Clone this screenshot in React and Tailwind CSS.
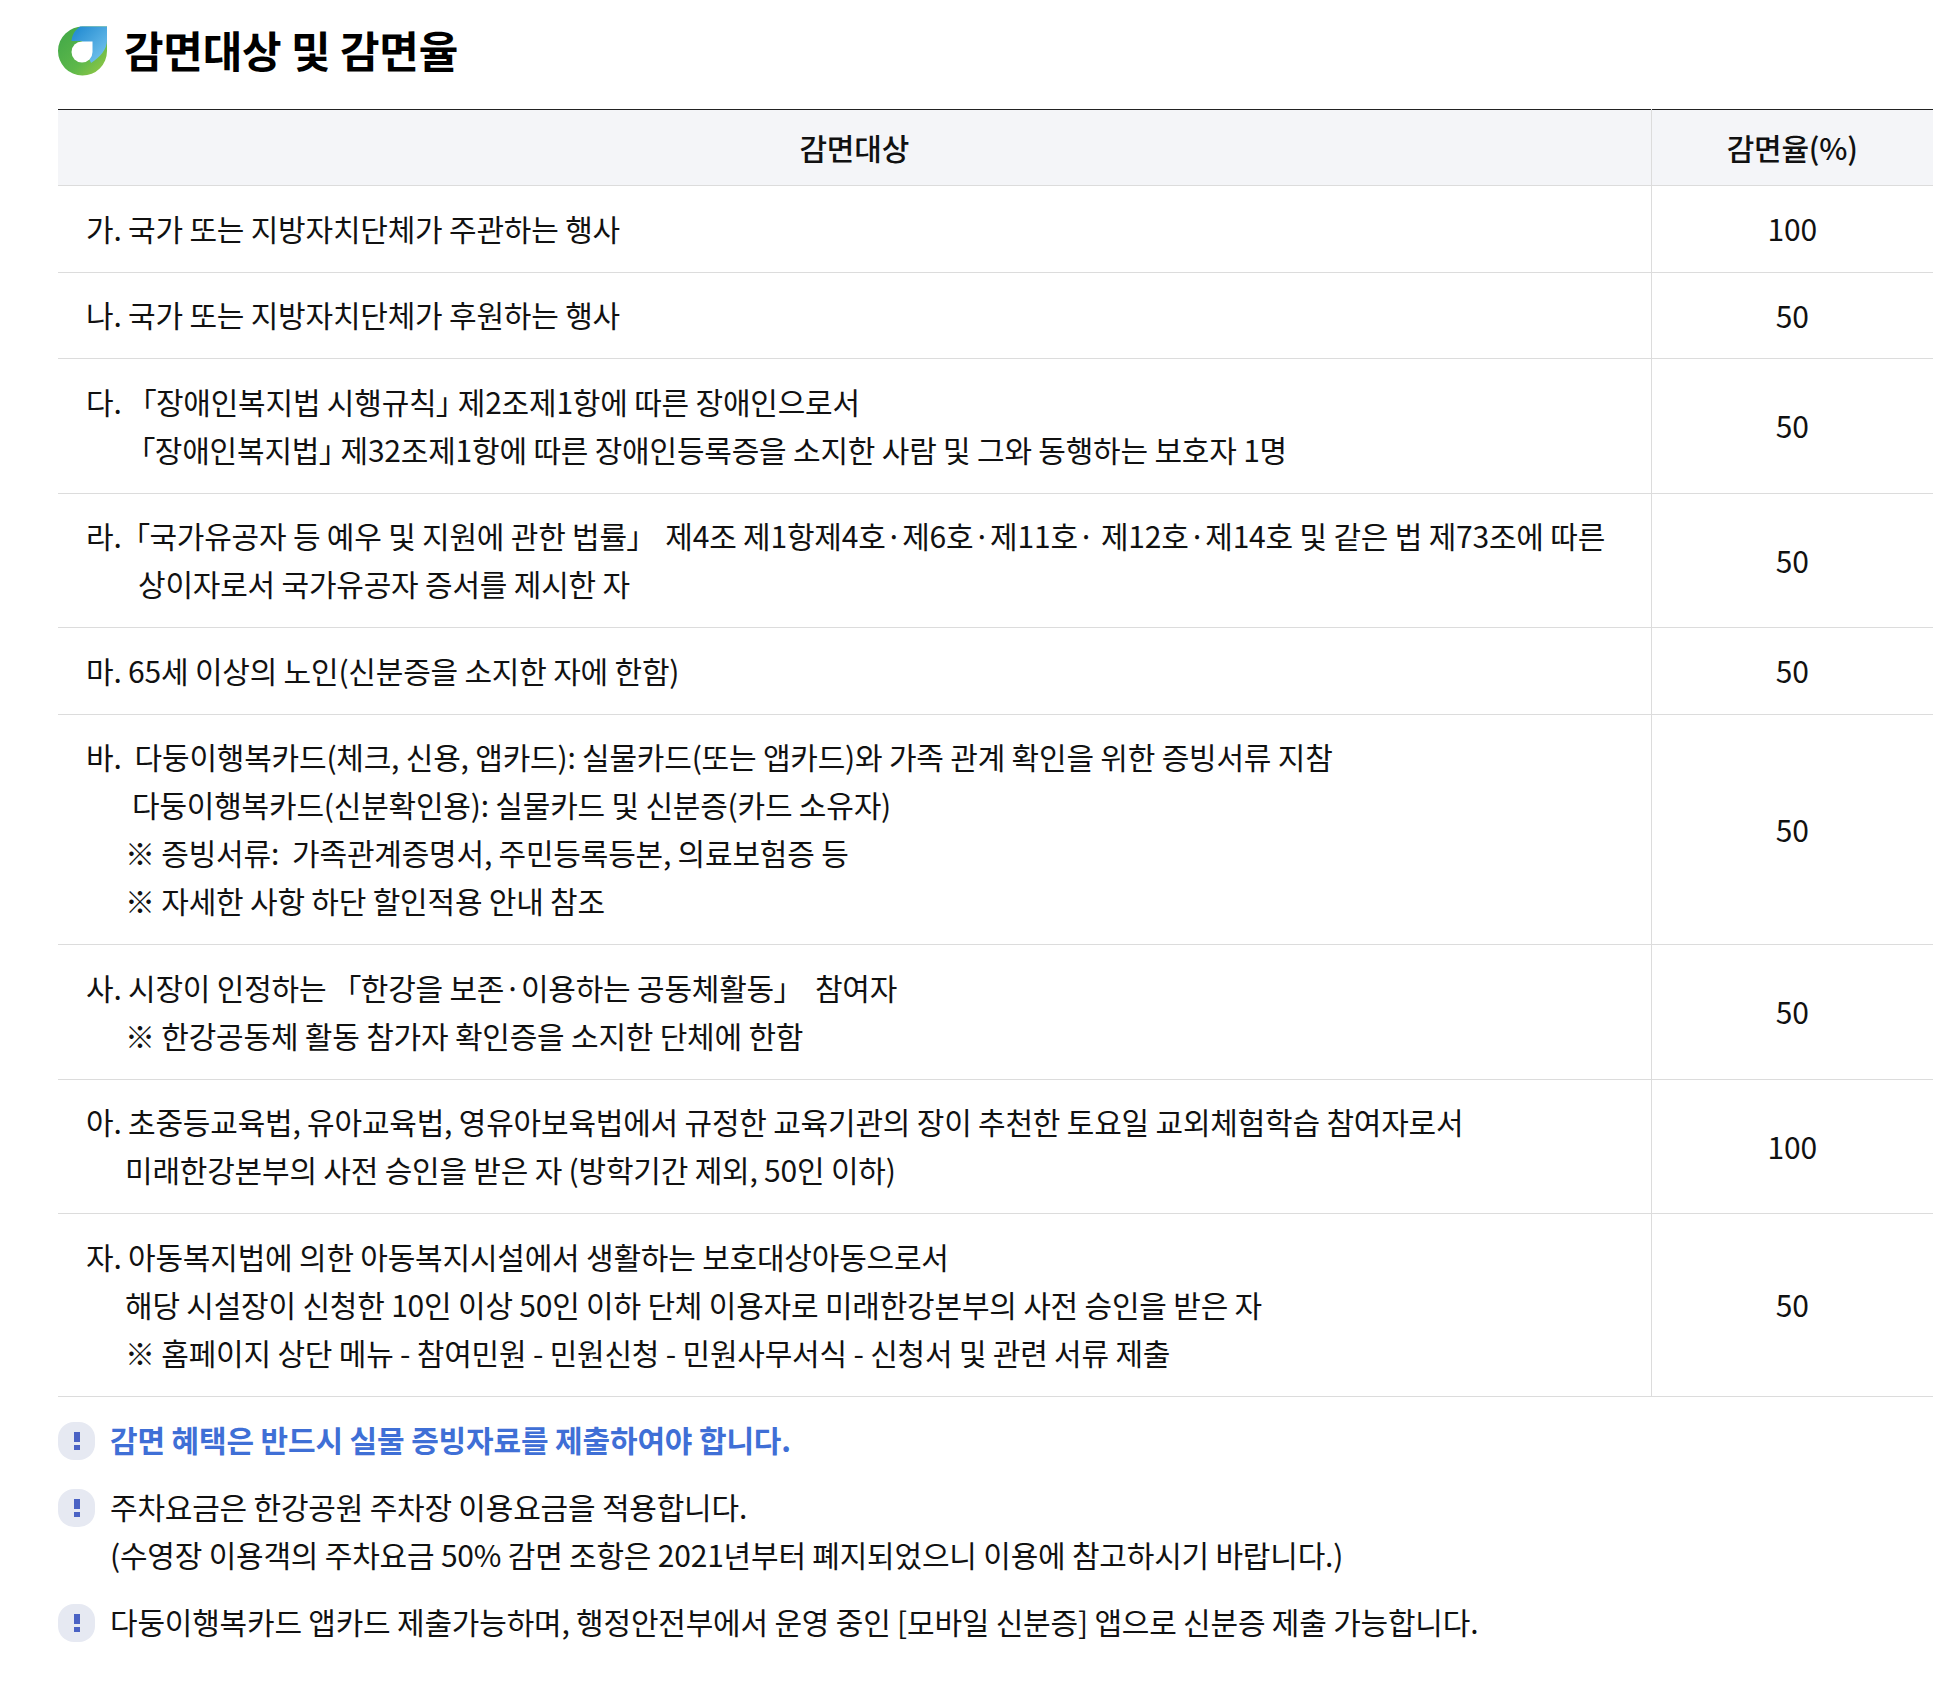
const Logo = () => (
  <svg width="50" height="50" viewBox="0 0 50 50" className="mt-[2px] self-start">
    <defs>
      <linearGradient id="g" x1="0" y1="0" x2="1" y2="1">
        <stop offset="0" stopColor="#3fa648" />
        <stop offset="0.6" stopColor="#5db84a" />
        <stop offset="1" stopColor="#9ccb45" />
      </linearGradient>
      <linearGradient id="b" x1="0" y1="0" x2="1" y2="1">
        <stop offset="0" stopColor="#1b86cf" />
        <stop offset="1" stopColor="#7cc9f0" />
      </linearGradient>
    </defs>
    <path d="M25 0.5H49V25A24.5 24.5 0 1 1 25 0.5Z" fill="url(#g)" />
    <path d="M22 0.5H49V14C49 24 42 31 33 37L24 15H13.5C14 9 17 4 22 0.5Z" fill="url(#b)" />
    <path d="M24 15.5H34.5V26A10.5 10.5 0 1 1 24 15.5Z" fill="#fff" />
  </svg>
);

const Bang = () => (
  <span className="mt-[7px] flex h-[38px] w-[37px] shrink-0 flex-col items-center justify-center gap-[3px] rounded-[16px] bg-[#e6e9f2]">
    <span className="h-[10px] w-[6px] bg-[#4a62c4]" />
    <span className="h-[5px] w-[6px] bg-[#4a62c4]" />
  </span>
);

const rows = [
  [["가. 국가 또는 지방자치단체가 주관하는 행사", 0]], "100",
  [["나. 국가 또는 지방자치단체가 후원하는 행사", 0]], "50",
  [["다.   ", 0, "「장애인복지법 시행규칙」", " 제2조제1항에 따른 장애인으로서"], ["", 54, "「장애인복지법」", " 제32조제1항에 따른 장애인등록증을 소지한 사람 및 그와 동행하는 보호자 1명"]], "50",
  [["라.  ", 0, "「국가유공자 등 예우 및 지원에 관한 법률」", "    제4조 제1항제4호·제6호·제11호· 제12호·제14호 및 같은 법 제73조에 따른", -2.5], ["상이자로서 국가유공자 증서를 제시한 자", 52]], "50",
  [["마. 65세 이상의 노인(신분증을 소지한 자에 한함)", 0]], "50",
  [["바.  다둥이행복카드(체크, 신용, 앱카드): 실물카드(또는 앱카드)와 가족 관계 확인을 위한 증빙서류 지참", 0], ["다둥이행복카드(신분확인용): 실물카드 및 신분증(카드 소유자)", 46], ["※ 증빙서류:  가족관계증명서, 주민등록등본, 의료보험증 등", 39], ["※ 자세한 사항 하단 할인적용 안내 참조", 39]], "50",
  [["사. 시장이 인정하는   ", 0, "「한강을 보존·이용하는 공동체활동」", "    참여자"], ["※ 한강공동체 활동 참가자 확인증을 소지한 단체에 한함", 39]], "50",
  [["아. 초중등교육법, 유아교육법, 영유아보육법에서 규정한 교육기관의 장이 추천한 토요일 교외체험학습 참여자로서", 0], ["미래한강본부의 사전 승인을 받은 자 (방학기간 제외, 50인 이하)", 39]], "100",
  [["자. 아동복지법에 의한 아동복지시설에서 생활하는 보호대상아동으로서", 0], ["해당 시설장이 신청한 10인 이상 50인 이하 단체 이용자로 미래한강본부의 사전 승인을 받은 자", 39], ["※ 홈페이지 상단 메뉴 - 참여민원 - 민원신청 - 민원사무서식 - 신청서 및 관련 서류 제출", 39]], "50",
];

const grouped = [];
for (let i = 0; i < rows.length; i += 2) grouped.push([rows[i], rows[i + 1]]);

export default function App() {
  return (
    <div className="min-h-[1688px] bg-white pl-[58px] pr-[21px] pt-[24px] text-[30px] leading-[48px] tracking-[-0.2px] text-[#111] [font-family:'Noto_Sans_CJK_KR','Noto_Sans',sans-serif]">
      <div className="flex h-[50px] items-center gap-[16px]">
        <Logo />
        <h2 className="text-[43px] font-bold leading-[50px] text-black">감면대상 및 감면율</h2>
      </div>
      <table className="mt-[35px] w-full table-fixed border-collapse border-t border-[#222]">
        <colgroup>
          <col className="w-[1593px]" />
          <col />
        </colgroup>
        <thead>
          <tr className="h-[76px] bg-[#f4f5f8]">
            <th className="border-b border-r border-[#dcdcdc] pb-[2px] font-medium">감면대상</th>
            <th className="border-b border-[#dcdcdc] pb-[2px] font-medium">감면율(%)</th>
          </tr>
        </thead>
        <tbody>
          {grouped.map(([lines, val], i) => (
            <tr key={i}>
              <td className="whitespace-pre border-b border-r border-[#dcdcdc] pb-[19.75px] pt-[17.75px] pl-[28px]">
                {lines.map(([t, ind, br, rest, adj], j) => (
                  <div key={j} style={{ paddingLeft: ind }}>
                    {t}
                    {br && <span className="[font-feature-settings:'palt']" style={{ marginRight: adj }}>{br}</span>}
                    {rest}
                  </div>
                ))}
              </td>
              <td className="border-b border-[#dcdcdc] pb-[1px] text-center">{val}</td>
            </tr>
          ))}
        </tbody>
      </table>
      <div className="mt-[18px] flex flex-col gap-[19px]">
        <div className="flex gap-[15px]">
          <Bang />
          <p className="font-bold tracking-[-0.15px] text-[#3f6fd6]">감면 혜택은 반드시 실물 증빙자료를 제출하여야 합니다.</p>
        </div>
        <div className="flex gap-[15px]">
          <Bang />
          <p>주차요금은 한강공원 주차장 이용요금을 적용합니다.<br />(수영장 이용객의 주차요금 50% 감면 조항은 2021년부터 폐지되었으니 이용에 참고하시기 바랍니다.)</p>
        </div>
        <div className="flex gap-[15px]">
          <Bang />
          <p>다둥이행복카드 앱카드 제출가능하며, 행정안전부에서 운영 중인 [모바일 신분증] 앱으로 신분증 제출 가능합니다.</p>
        </div>
      </div>
    </div>
  );
}
